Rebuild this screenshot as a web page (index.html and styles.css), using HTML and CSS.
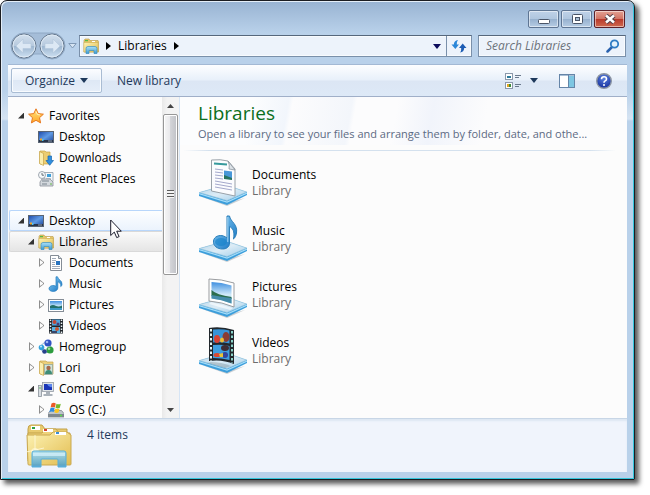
FILE: index.html
```html
<!DOCTYPE html>
<html lang="en">
<head>
  <meta charset="UTF-8">
  <meta name="viewport" content="width=device-width, initial-scale=1">
  <title>Libraries</title>
  <link rel="stylesheet" href="styles.css">
</head>
<body>

<!-- Icon sprite -->
<svg class="sprite" width="0" height="0" aria-hidden="true">
  <defs>
    <linearGradient id="g-folder" x1="0" y1="0" x2="1" y2="1">
      <stop offset="0" stop-color="#fdf3b4"/><stop offset="1" stop-color="#e2bc50"/>
    </linearGradient>
    <linearGradient id="g-blue" x1="0" y1="0" x2="0" y2="1">
      <stop offset="0" stop-color="#a9e0f8"/><stop offset="1" stop-color="#3f9bd0"/>
    </linearGradient>
    <linearGradient id="g-note" x1="0" y1="0" x2="1" y2="1">
      <stop offset="0" stop-color="#8ed2f6"/><stop offset="1" stop-color="#0f6fc0"/>
    </linearGradient>
    <linearGradient id="g-screen" x1="0" y1="0" x2="1" y2="1">
      <stop offset="0" stop-color="#1c48a8"/><stop offset=".5" stop-color="#5f9ae4"/><stop offset="1" stop-color="#1a3f94"/>
    </linearGradient>
    <linearGradient id="g-star" x1="0" y1="0" x2="0" y2="1">
      <stop offset="0" stop-color="#ffe680"/><stop offset="1" stop-color="#ffa726"/>
    </linearGradient>
    <linearGradient id="g-sky" x1="0" y1="0" x2="0" y2="1">
      <stop offset="0" stop-color="#3f8fe0"/><stop offset=".6" stop-color="#d4ecfa"/><stop offset="1" stop-color="#7cc0dc"/>
    </linearGradient>
    <linearGradient id="g-tray" x1="0" y1="0" x2="1" y2="1">
      <stop offset="0" stop-color="#b3d3e8"/><stop offset=".5" stop-color="#dcecf6"/><stop offset="1" stop-color="#9fcdea"/>
    </linearGradient>
    <linearGradient id="g-orb" x1="0" y1="0" x2="0" y2="1">
      <stop offset="0" stop-color="#d3e0ee"/><stop offset=".48" stop-color="#b7cade"/><stop offset=".5" stop-color="#9cb5cf"/><stop offset="1" stop-color="#cfe2f3"/>
    </linearGradient>
    <radialGradient id="g-help" cx=".5" cy=".3" r=".7">
      <stop offset="0" stop-color="#5d83e0"/><stop offset="1" stop-color="#152f9c"/>
    </radialGradient>

    <symbol id="i-libraries" viewBox="0 0 16 16">
      <path d="M1 2.500l1-1.500h4l1 1.500h8l.5 1v10.500h-14.500z" fill="#e5c668" stroke="#b89848" stroke-width=".6"/>
      <path d="M2 2h3v1.200h-3z" fill="#54b948"/><path d="M9 3h3v1h-3z" fill="#fff"/>
      <path d="M.8 4.500h14.400v9.500h-14.400z" fill="url(#g-folder)" stroke="#c9a851" stroke-width=".5"/>
      <path d="M3 15.500v-5q0-2 2-2h7q2 0 2 2v5h-3v-3h-5v3z" fill="url(#g-blue)" stroke="#3c8fc0" stroke-width=".7"/>
    </symbol>

    <symbol id="i-libraries-big" viewBox="0 0 48 48">
      <path d="M3 6q0-4 3-4h11l3 4h22v30h-39z" fill="#e8ca6e" stroke="#c3a24a"/>
      <rect x="6" y="3" width="9" height="4" fill="#fff"/><rect x="7" y="4" width="3" height="2" fill="#2fa043"/>
      <path d="M3 10h14l3-4h11l3 4h11v28h-42z" fill="#efd37b" stroke="#c3a24a"/>
      <rect x="18" y="6" width="10" height="3" fill="#fff"/><rect x="19" y="6" width="3" height="2" fill="#d8422c"/>
      <path d="M2 12h23l3-3h14l4 3v29q0 1-1 1h-41q-1 0-1-1z" fill="url(#g-folder)" stroke="#c9a851"/>
      <rect x="30" y="9" width="11" height="3" fill="#fff"/><rect x="31" y="9" width="3" height="2" fill="#3b8fd6"/>
      <path d="M10 12v22M1 29l18-4" stroke="#fffbe0" stroke-width="1" opacity=".8"/>
      <circle cx="10" cy="29" r="4" fill="#fffbe0" opacity=".6"/>
      <path d="M7 44v-14q0-2 2-2h30q2 0 2 2v14h-8v-7q0-1-1-1h-15q-1 0-1 1v7z" fill="url(#g-blue)" fill-opacity=".85" stroke="#56aeda"/>
      <path d="M8 30h32v3h-32z" fill="#d6f2fd" opacity=".7"/>
    </symbol>

    <symbol id="i-star" viewBox="0 0 16 16">
      <path d="M8 .8l2.200 4.800 5.200.6-3.900 3.500 1.100 5.200-4.600-2.600-4.600 2.600 1.100-5.200-3.900-3.500 5.200-.6z" fill="url(#g-star)" stroke="#e8781e"/>
      <path d="M8 3.500l1.400 3 2.500.4" fill="none" stroke="#fff3bd"/>
    </symbol>

    <symbol id="i-desktop" viewBox="0 0 16 16">
      <rect x=".5" y="2.500" width="15" height="11" fill="url(#g-screen)" stroke="#596473"/>
      <rect x="1" y="11" width="14" height="2" fill="#28344a"/>
      <path d="M2 9.500h2v2h-2z" fill="#f0a52c"/><path d="M4 10h1.500v2h-1.500z" fill="#4fc4f4"/>
      <path d="M10 12h4" stroke="#a9bad0" stroke-width=".8"/>
    </symbol>

    <symbol id="i-downloads" viewBox="0 0 16 16">
      <path d="M2 1h5l1 1h4v12h-10z" fill="#eccd70" stroke="#c5a349" stroke-width=".7"/>
      <path d="M1.500 1.500l4 2v12l-4-2z" fill="#fbeeae" stroke="#c5a349" stroke-width=".7"/>
      <path d="M10 6h3.500v4.500h2l-3.800 4.800-3.700-4.800h2z" fill="#2f8fe0" stroke="#1765ae" stroke-width=".7"/>
    </symbol>

    <symbol id="i-recent" viewBox="0 0 16 16">
      <path d="M6 1.500h9v9h-9z" fill="#f4f7fa" stroke="#9099a3" stroke-width=".8"/>
      <path d="M9 3h4v3h-4z" fill="#3f9fd8"/><path d="M8 8h5" stroke="#80909f"/>
      <path d="M2 11l2-3h8l3 3v4h-13z" fill="#d3d8dd" stroke="#8a9199" stroke-width=".8"/>
      <path d="M4 10h7M4 13h5" stroke="#7b858f"/><path d="M12 13h2" stroke="#65b848"/>
      <circle cx="4" cy="4" r="3.500" fill="#f7fafc" stroke="#8a939d" stroke-width=".8"/>
      <path d="M4 2v2.200h2" fill="none" stroke="#46515c" stroke-width=".8"/>
    </symbol>

    <symbol id="i-document" viewBox="0 0 16 16">
      <path d="M2.500.5h8l3 3v12h-11z" fill="#fff" stroke="#858d96"/>
      <path d="M10.500.5v3h3" fill="#dfe5ea" stroke="#858d96"/>
      <path d="M4 3.500h4M4 5.500h4M4 7.500h3M4 9.500h3M4 11.500h8M4 13.500h8" stroke="#8997a8" stroke-width=".8"/>
      <rect x="8" y="6" width="4" height="4" fill="#2874c0"/>
    </symbol>

    <symbol id="i-music" viewBox="0 0 16 16">
      <path d="M8 .8h1.500c.5 3 4.800 3.500 4.500 7.500-.1 1.300-.8 2-1.200 2.300.4-3-1.300-4.200-3-4.800v6.200c0 2-2 3.400-4.500 3.400-2.300 0-4.500-1-4.300-3 .2-2 2.700-3.200 5-2.800l2 .6z" fill="url(#g-note)" stroke="#1d78bd" stroke-width=".7"/>
    </symbol>

    <symbol id="i-picture" viewBox="0 0 16 16">
      <rect x=".5" y="2.500" width="15" height="12" fill="#fff" stroke="#858d96"/>
      <rect x="2" y="4" width="12" height="9" fill="url(#g-sky)"/>
      <path d="M2 9q3-2 6 0 3 1 6-.5v2.500h-12z" fill="#24706a"/><path d="M2 11h12v2h-12z" fill="#3f9ac8"/>
    </symbol>

    <symbol id="i-video" viewBox="0 0 16 16">
      <rect x="1" y="1" width="14" height="14.500" fill="#20262c"/>
      <rect x="4" y="1.500" width="8" height="6" fill="#4fa3dc"/><rect x="4" y="9" width="8" height="6" fill="#58b4e6"/>
      <circle cx="6.500" cy="4" r="2" fill="#bf4736"/><circle cx="10" cy="6" r="1.500" fill="#4b3a72"/>
      <circle cx="9" cy="11" r="2" fill="#c85632"/><path d="M4 14h5" stroke="#34466e" stroke-width="2"/>
      <path d="M2.500 1.500v14M13.500 1.500v14" stroke="#eaf3f5" stroke-width="1.500" stroke-dasharray="1.500 1.500"/>
    </symbol>

    <symbol id="i-homegroup" viewBox="0 0 16 16">
      <circle cx="8" cy="8.500" r="5" fill="none" stroke="#8fb6d8"/>
      <circle cx="10" cy="4" r="3.600" fill="#3153c4"/><circle cx="3.500" cy="8.500" r="2.800" fill="#35a2dc"/>
      <circle cx="12" cy="11" r="3.600" fill="#2d9c3e"/><circle cx="6.500" cy="12.500" r="2.300" fill="#27418c"/>
      <circle cx="9" cy="3" r="1.300" fill="#9db4f2"/><circle cx="11" cy="9.800" r="1.300" fill="#a5e29e"/><circle cx="3" cy="7.500" r="1" fill="#c6ecfb"/>
    </symbol>

    <symbol id="i-user" viewBox="0 0 16 16">
      <path d="M2 1h6l1 1h6v12h-13z" fill="#ecd07c" stroke="#c5a349" stroke-width=".7"/>
      <path d="M1.500 1.500l4 2v12l-4-2z" fill="#fbeeae" stroke="#c5a349" stroke-width=".7"/>
      <rect x="6.500" y="4.500" width="8" height="10" fill="#cfe3dc" stroke="#8ca398" stroke-width=".7"/>
      <circle cx="10.500" cy="8" r="2.200" fill="#a5694a"/><path d="M7 14q0-4 3.500-4t3.500 4z" fill="#3f8d77"/>
    </symbol>

    <symbol id="i-computer" viewBox="0 0 16 16">
      <rect x=".5" y="4.500" width="3" height="11" fill="#d8dde2" stroke="#8a929b" stroke-width=".8"/>
      <path d="M1.500 7h1" stroke="#3cae3c" stroke-width="1.500"/>
      <rect x="4.500" y="1.500" width="11" height="9" fill="#dfe4e8" stroke="#939ba4" stroke-width=".8"/>
      <rect x="6" y="3" width="8" height="6" fill="#1a35b6"/><path d="M9 3h5v3q-3 1-5-3z" fill="#5c86ec"/>
      <path d="M8 11h4v2h2.500v2h-9v-2h2.500z" fill="#aab2ba"/>
    </symbol>

    <symbol id="i-drive" viewBox="0 0 16 16">
      <path d="M0 11.500l2.500-3h11l2.500 3v3.500h-16z" fill="#bfc5cb" stroke="#737b84" stroke-width=".7"/>
      <path d="M0 12h16v3h-16z" fill="#7f8890"/><path d="M12 13.500h2" stroke="#5be04a" stroke-width="1.500"/>
      <path d="M3.500 1.500q2.500-1.500 4.300 0l-.9 4q-2-1.200-4.300 0z" fill="#ec5a26"/>
      <path d="M8.500 1.800q2 1 4.300 0l-1 4q-2 1.200-4.300 0z" fill="#76b82a"/>
      <path d="M2.400 6.200q2.500-1.300 4.300 0l-1 3.800q-2-1.200-4.300 0z" fill="#2f8ce0"/>
      <path d="M7.300 6.500q2 1.200 4.300 0l-1 3.800q-2 1.200-4.300 0z" fill="#fbc51e"/>
    </symbol>

    <symbol id="i-tray" viewBox="0 0 48 48">
      <path d="M3 38l25 9 18-8-18 5z" fill="#9aa4ac" opacity=".5"/>
      <path d="M0 33.500l27-7.500 21 7v3l-20 10-28-9z" fill="#3c9edb"/>
      <path d="M0 34.500l28 8.500 20-9" fill="none" stroke="#a4dcf8" stroke-width="1.200"/>
      <path d="M.5 33.500l26.500-7.500 20.500 7-19.500 8.500z" fill="url(#g-tray)" stroke="#a5cbe0" stroke-width=".7"/>
    </symbol>

    <symbol id="b-document" viewBox="0 0 48 48">
      <use href="#i-tray"/>
      <path d="M12.500 1q9-1 16.500 1l7 8v27l-23.500-5z" fill="#fbfcfe" stroke="#8e979f" stroke-width=".9"/>
      <path d="M29 2q2 4 1 8l6 1z" fill="#dde3e8" stroke="#8e979f" stroke-width=".8"/>
      <path d="M15 4.500l13 1" stroke="#36999c" stroke-width="2"/>
      <path d="M16 10l8 1M16 13l8 1M16 16l8 1M16 19l8 1M16 22l17 3M16 25l17 3M16 28l17 3" stroke="#a4a9cc" stroke-width="1"/>
      <path d="M25 11.500l8 1v8l-8-1z" fill="#4897d8"/><path d="M25 16l8 3v2l-8-1z" fill="#277360"/>
    </symbol>

    <symbol id="b-music" viewBox="0 0 48 48">
      <use href="#i-tray"/>
      <path d="M28 1h2.500c1 6 8.500 8 7 17-.4 2.500-1.500 5-3 6 1.500-8-1-11-4-12.500v16.500c0 4-3 6-7 6-5 0-9.500-3-9-8 .4-4.500 6-6.500 10-5 1.500.5 2.600 1.200 3.500 2z" fill="url(#g-note)" stroke="#2b7fba"/>
      <ellipse cx="22" cy="27" rx="6" ry="4" fill="#1482ca" opacity=".6"/>
      <path d="M28.800 2v25" stroke="#b9e5fb" stroke-width=".8"/>
    </symbol>

    <symbol id="b-picture" viewBox="0 0 48 48">
      <use href="#i-tray"/>
      <path d="M10 8q12 0 25 4v24q-12-5-25-6z" fill="#fff" stroke="#9a9da0"/>
      <path d="M12.500 11q10 0 20 3.500v18q-10-4-20-5z" fill="url(#g-sky)"/>
      <path d="M12.500 19q5 5 20 7v2q-10 0-20-3z" fill="#2c6e4d"/>
      <path d="M12.500 24q10 2 20 3v5.500q-10-4-20-5z" fill="#468dab"/>
      <path d="M12 31l22 6-3 2-21-6z" fill="#fff" opacity=".6"/>
    </symbol>

    <symbol id="b-video" viewBox="0 0 48 48">
      <use href="#i-tray"/>
      <path d="M10 1q12-2 25 2v34q-12-5-25-3z" fill="#22282d"/>
      <path d="M14 2.500q9-1 16.500 1v13q-8-2-16.500-1z" fill="#3894d8"/>
      <path d="M14 18q9-1 16.500 1v14q-8-2-16.500-2z" fill="#3e9fe0"/>
      <ellipse cx="27" cy="10" rx="3.500" ry="5" fill="#8a3c33"/><ellipse cx="18" cy="12" rx="3" ry="4" fill="#d74335"/>
      <ellipse cx="23" cy="13" rx="2" ry="2.500" fill="#f0bd32"/><ellipse cx="26" cy="21" rx="4" ry="3" fill="#3d2c34"/>
      <ellipse cx="18" cy="28" rx="3.500" ry="2" fill="#dc4931"/><ellipse cx="26" cy="28" rx="3" ry="3" fill="#35469b"/><path d="M20 27l4-1v4h-3z" fill="#e9c336"/>
      <path d="M12 2v32" stroke="#e6f7f5" stroke-width="2" stroke-dasharray="2.500 2"/>
      <path d="M33 4v32" stroke="#8ad3ca" stroke-width="2" stroke-dasharray="2.500 2"/>
      <path d="M12 35q10 0 20 4l-6 2-18-5z" fill="#7a8b94" opacity=".4"/>
    </symbol>
  </defs>
</svg>

<div class="window">
  <header class="frame-top">
    <div class="titlebar">
      <button class="caption" aria-label="Minimize">
        <svg width="14" height="14"><rect x="1.500" y="7.500" width="11" height="4" rx="1" fill="#fff" stroke="#4a5568"/></svg>
      </button>
      <button class="caption" aria-label="Maximize">
        <svg width="14" height="14"><rect x="2.500" y="2.500" width="10" height="9" rx="1" fill="#fff" stroke="#4a5568"/><rect x="5.500" y="5.500" width="4" height="3" fill="#a9bdd3" stroke="#4a5568"/></svg>
      </button>
      <button class="caption close" aria-label="Close">
        <svg width="14" height="14"><path d="M3 3.500l8 7M11 3.500l-8 7" stroke="#55414a" stroke-width="4.500"/><path d="M3 3.500l8 7M11 3.500l-8 7" stroke="#fff" stroke-width="2.500"/></svg>
      </button>
    </div>

    <div class="navbar">
      <div class="travel">
        <svg class="travel-bed" width="56" height="28" aria-hidden="true">
          <path d="M14 1h28a13 13 0 0 1 0 26q-6 0-10-5h-8q-4 5-10 5a13 13 0 0 1 0-26z" fill="#a5bdd8" stroke="#8fa8c4"/>
        </svg>
        <button class="orb" aria-label="Back">
          <svg width="26" height="26"><circle cx="13" cy="13" r="12" fill="url(#g-orb)" stroke="#66788d"/><circle cx="13" cy="13" r="11" fill="none" stroke="#dfeaf5"/><path d="M5 13l7-7v4.500h8v5h-8v4.500z" fill="#dce8f4" stroke="#b4c8dc" stroke-width=".6"/></svg>
        </button>
        <button class="orb" aria-label="Forward">
          <svg width="26" height="26"><circle cx="13" cy="13" r="12" fill="url(#g-orb)" stroke="#66788d"/><circle cx="13" cy="13" r="11" fill="none" stroke="#dfeaf5"/><path d="M21 13l-7-7v4.500h-8v5h8v4.500z" fill="#dce8f4" stroke="#b4c8dc" stroke-width=".6"/></svg>
        </button>
      </div>
      <button class="recent" aria-label="Recent pages">
        <svg width="9" height="6"><path d="M.8.5h7.400l-3.700 4.500z" fill="#d6e4f2" stroke="#8099b5"/></svg>
      </button>

      <nav class="address">
        <svg class="icon"><use href="#i-libraries"/></svg>
        <svg class="crumb-arrow" width="5" height="8"><path d="M0 0l5 4-5 4z"/></svg>
        <a href="#">Libraries</a>
        <svg class="crumb-arrow" width="5" height="8"><path d="M0 0l5 4-5 4z"/></svg>
        <button class="history" aria-label="Previous locations">
          <svg width="8" height="5"><path d="M0 0h8l-4 5z" fill="#0c0c5c"/></svg>
        </button>
        <button class="refresh" aria-label="Refresh">
          <svg width="16" height="16"><path d="M7 2q-1.500 1.500-1.200 4.500h2.200l-3.700 4.500-3.800-4.500h2.300q.2-4 4.200-4.500z" fill="#2b87d8"/><path d="M9 14.500q1.500-1.500 1.200-4.500h-2.200l3.700-4.500 3.800 4.500h-2.300q-.2 4-4.200 4.500z" fill="#1c5cb4"/></svg>
        </button>
      </nav>

      <div class="search">
        <input type="search" placeholder="Search Libraries" aria-label="Search Libraries">
        <svg width="14" height="14"><path d="M6.500 7.500l-5 5" stroke="#2a62ae" stroke-width="2.500" stroke-linecap="round"/><circle cx="8.500" cy="5" r="3.700" fill="#e4f2fc" stroke="#2f7cc4" stroke-width="1.800"/></svg>
      </div>
    </div>
  </header>

  <div class="client">
    <div class="toolbar">
      <button class="organize">Organize
        <svg width="8" height="5"><path d="M0 0h8l-4 5z" fill="#1e395b"/></svg>
      </button>
      <button class="plain">New library</button>
      <div class="tools">
        <button aria-label="Change your view">
          <svg width="16" height="16"><rect x=".5" y=".5" width="7" height="6" fill="#fff" stroke="#8b99ab"/><rect x="2" y="3" width="4" height="2" fill="#2d7a9a"/><rect x=".5" y="9.500" width="7" height="6" fill="#fff" stroke="#8b99ab"/><path d="M2 11h2v3h-2z" fill="#e0a420"/><path d="M4 11h2v3h-2z" fill="#3b8a3b"/><path d="M10 2.500h6M10 4.500h4M10 11.500h6M10 13.500h4" stroke="#6b7a8e"/></svg>
          <svg width="8" height="5"><path d="M0 0h8l-4 5z" fill="#1e395b"/></svg>
        </button>
        <button aria-label="Show the preview pane">
          <svg width="16" height="14"><rect x=".5" y=".5" width="15" height="13" fill="#fff" stroke="#6585a8"/><path d="M1 1.500h14" stroke="#a9bfd6"/><rect x="10" y="2" width="5" height="11" fill="#7dc6e2"/><path d="M9.500 1v12" stroke="#6585a8"/></svg>
        </button>
        <button aria-label="Get help">
          <svg width="16" height="16"><circle cx="8" cy="8" r="7.300" fill="url(#g-help)" stroke="#8c95a3" stroke-width="1.400"/><path d="M5.500 6.200q0-2.400 2.500-2.400t2.500 2.200q0 1.200-1.300 1.900-1.200.7-1.200 1.800" fill="none" stroke="#fff" stroke-width="1.600"/><circle cx="8" cy="12" r="1" fill="#fff"/></svg>
        </button>
      </div>
    </div>

    <div class="panes">
      <aside class="sidebar">
        <ul class="tree">
          <li><a href="#" class="open"><i></i><svg class="icon"><use href="#i-star"/></svg>Favorites</a></li>
          <li><a href="#" class="level-2"><i></i><svg class="icon"><use href="#i-desktop"/></svg>Desktop</a></li>
          <li><a href="#" class="level-2"><i></i><svg class="icon"><use href="#i-downloads"/></svg>Downloads</a></li>
          <li><a href="#" class="level-2"><i></i><svg class="icon"><use href="#i-recent"/></svg>Recent Places</a></li>
        </ul>
        <ul class="tree">
          <li><a href="#" class="open hovered"><i></i><svg class="icon"><use href="#i-desktop"/></svg>Desktop</a></li>
          <li><a href="#" class="level-2 open selected"><i></i><svg class="icon"><use href="#i-libraries"/></svg>Libraries</a></li>
          <li><a href="#" class="level-3 closed"><i></i><svg class="icon"><use href="#i-document"/></svg>Documents</a></li>
          <li><a href="#" class="level-3 closed"><i></i><svg class="icon"><use href="#i-music"/></svg>Music</a></li>
          <li><a href="#" class="level-3 closed"><i></i><svg class="icon"><use href="#i-picture"/></svg>Pictures</a></li>
          <li><a href="#" class="level-3 closed"><i></i><svg class="icon"><use href="#i-video"/></svg>Videos</a></li>
          <li><a href="#" class="level-2 closed"><i></i><svg class="icon"><use href="#i-homegroup"/></svg>Homegroup</a></li>
          <li><a href="#" class="level-2 closed"><i></i><svg class="icon"><use href="#i-user"/></svg>Lori</a></li>
          <li><a href="#" class="level-2 open"><i></i><svg class="icon"><use href="#i-computer"/></svg>Computer</a></li>
          <li><a href="#" class="level-3 closed"><i></i><svg class="icon"><use href="#i-drive"/></svg>OS (C:)</a></li>
        </ul>
      </aside>

      <div class="scrollbar" aria-hidden="true">
        <div class="scroll-arrow"><svg width="7" height="4"><path d="M0 4l3.500-4 3.500 4z" fill="#444"/></svg></div>
        <div class="thumb"><span></span></div>
        <div class="scroll-arrow last"><svg width="7" height="4"><path d="M0 0l3.500 4 3.500-4z" fill="#444"/></svg></div>
      </div>

      <main class="content">
        <div class="heading">
          <h1>Libraries</h1>
          <p>Open a library to see your files and arrange them by folder, date, and othe...</p>
        </div>
        <ul class="items">
          <li><a href="#"><svg><use href="#b-document"/></svg><span>Documents<small>Library</small></span></a></li>
          <li><a href="#"><svg><use href="#b-music"/></svg><span>Music<small>Library</small></span></a></li>
          <li><a href="#"><svg><use href="#b-picture"/></svg><span>Pictures<small>Library</small></span></a></li>
          <li><a href="#"><svg><use href="#b-video"/></svg><span>Videos<small>Library</small></span></a></li>
        </ul>
      </main>
    </div>

    <footer class="details">
      <svg><use href="#i-libraries-big"/></svg>
      <span>4 items</span>
    </footer>
  </div>

  <svg class="pointer" width="12" height="20" aria-hidden="true"><path d="M.7 1v15.500l3.600-3.400 2.400 5.500 2.400-1-2.400-5.400h4.600z" fill="#fff" stroke="#1c1c2c"/></svg>
</div>

</body>
</html>
```
FILE: styles.css
```css
* {
  box-sizing: border-box;
}
body {
  margin: 0;
  padding: 0 15px 15px 0;
  height: 100vh;
  background: #fff;
  font-family: "Open Sans", "Noto Sans", sans-serif;
  font-size: 12px;
  line-height: 16px;
  color: #000;
}
ul {
  list-style: none;
  margin: 0;
  padding: 0;
}
a {
  color: inherit;
  text-decoration: none;
}
button {
  display: flex;
  align-items: center;
  justify-content: center;
  padding: 0;
  border: 0;
  background: none;
  font: inherit;
  color: inherit;
}
svg {
  display: block;
  flex: none;
}
.sprite {
  position: absolute;
}
.icon {
  width: 16px;
  height: 16px;
}

/* window frame */
.window {
  position: relative;
  display: flex;
  flex-direction: column;
  height: 100%;
  padding: 0 7px 7px;
  border: 1px solid #1b1d22;
  border-radius: 7px 7px 0 0;
  background: linear-gradient(#98b3d2, #b9d1ea 32px, #b9d1ea 90px, #d5e3f2 118px, #b9d1ea 120px);
  box-shadow: inset 1px 1px 0 #e4eef8, inset -1px -1px 0 #34c6dc, 4px 4px 5px rgba(0, 0, 0, 0.65);
}
.frame-top {
  padding: 9px 1px 0 3px;
}
.titlebar {
  display: flex;
  justify-content: flex-end;
  gap: 2px;
  padding-right: 1px;
}
.caption {
  width: 31px;
  height: 18px;
  border: 1px solid #5e7593;
  border-radius: 2px;
  background: linear-gradient(#bfd2e8, #b0c6df 48%, #96b0ce 50%, #b6cce4);
  box-shadow: inset 0 0 0 1px rgba(255, 255, 255, 0.5);
}
.caption.close {
  border-color: #5b2029;
  background: linear-gradient(#e3a193, #d27465 48%, #b8382a 50%, #cf6a50);
}

/* navigation row */
.navbar {
  display: flex;
  align-items: center;
  height: 36px;
}
.travel {
  position: relative;
  display: flex;
  gap: 2px;
}
.travel-bed {
  position: absolute;
  left: -1px;
  top: -1px;
}
.orb {
  position: relative;
  width: 26px;
  height: 26px;
}
.recent {
  width: 14px;
}
.address,
.search {
  display: flex;
  align-items: center;
  height: 22px;
  border: 1px solid #7a90aa;
  border-top-color: #56677c;
  background: #edf3fb;
  box-shadow: inset 0 0 0 1px #f8fbfe;
}
.address {
  flex: 1;
  gap: 7px;
  padding-left: 3px;
}
.history {
  width: 18px;
  margin-left: auto;
}
.refresh {
  width: 25px;
  height: 20px;
  margin-left: -7px;
  border-left: 1px solid #7a90aa;
}
.search {
  width: 148px;
  margin-left: 6px;
  padding: 0 5px 0 7px;
}
.search input {
  flex: 1;
  min-width: 0;
  padding: 0;
  border: 0;
  outline: 0;
  background: none;
  font: inherit;
  font-style: italic;
}
.search input::placeholder {
  color: #6d747c;
}

/* client area */
.client {
  flex: 1;
  display: flex;
  flex-direction: column;
  min-height: 0;
  background: #fcfcfc;
}
.toolbar {
  display: flex;
  align-items: center;
  height: 33px;
  padding: 0 15px 0 3px;
  border-top: 1px solid #a3b9d4;
  border-bottom: 1px solid #a0afc8;
  background: linear-gradient(#fdfeff, #e8f0fa 48%, #dce6f4 52%, #dde9f7);
  color: #1e395b;
}
.organize {
  gap: 5px;
  width: 91px;
  height: 25px;
  border: 1px solid #a9bcd3;
  border-radius: 2px;
  background: linear-gradient(#fcfdff, #eaf1fa 48%, #dee8f5 50%, #e6eef9);
  box-shadow: inset 0 0 0 1px #f8fbfe;
}
.plain {
  margin-left: 15px;
}
.tools {
  display: flex;
  align-items: center;
  gap: 21px;
  margin-left: auto;
}
.tools button {
  gap: 9px;
}

.panes {
  flex: 1;
  display: flex;
  min-height: 0;
}
.sidebar {
  width: 154px;
  padding: 8px 0 0 1px;
  overflow: hidden;
}
.tree {
  margin-bottom: 21px;
}
.tree a {
  display: flex;
  align-items: center;
  height: 21px;
  padding-left: 8px;
  border: 1px solid transparent;
  border-right: 0;
  border-radius: 2px 0 0 2px;
}
.tree .level-2 {
  padding-left: 18px;
}
.tree .level-3 {
  padding-left: 28px;
}
.tree .icon {
  margin-right: 5px;
}
.tree i {
  width: 9px;
  height: 9px;
  margin-right: 1px;
}
.tree .open i {
  width: 6px;
  height: 6px;
  margin-right: 4px;
  background: #333;
  clip-path: polygon(100% 0, 100% 100%, 0 100%);
}
.tree .closed i {
  background: #8d8d8d;
  clip-path: polygon(evenodd, 1px 0, 6px 4px, 6px 5px, 1px 9px, 1px 0, 2px 2px, 2px 7px, 5px 5px, 5px 4px, 2px 2px);
}
.tree .hovered {
  border-color: #b8d6fb;
  background: linear-gradient(#fdfeff, #ebf3fd);
}
.tree .selected {
  border-color: #d9d9d9;
  background: linear-gradient(#fafafa, #e5e5e5);
}

.scrollbar {
  display: flex;
  flex-direction: column;
  width: 17px;
  background: linear-gradient(90deg, #e9e9e9, #f3f3f3 30%, #f3f3f3);
}
.scroll-arrow {
  display: flex;
  align-items: center;
  justify-content: center;
  height: 17px;
}
.scroll-arrow.last {
  margin-top: auto;
}
.thumb {
  display: flex;
  align-items: center;
  justify-content: center;
  height: 50%;
  margin: 0 1px;
  border: 1px solid #979797;
  border-radius: 2px;
  background: linear-gradient(90deg, #f6f6f6, #e9e9ec 45%, #d3d4d8 50%, #bfc1c6);
  box-shadow: inset 0 0 0 1px #fff;
}
.thumb span {
  width: 7px;
  height: 8px;
  background: repeating-linear-gradient(#5c5c5c 0 1px, #f4f4f4 1px 3px);
}

.content {
  flex: 1;
  min-width: 0;
  border-left: 1px solid #d6e5f5;
  background: linear-gradient(100deg, #fcfdfe 16%, #f2f6fc 24%, #fcfcfd 25%, #f3f6fb 38%, #fcfcfd 39%, #fcfcfd 48%, #f1f4fb 56%, #fcfcfd 68%) no-repeat 0 0 / 100% 48px;
}
.heading {
  margin: 0 12px 0 4px;
  padding: 4px 0 8px 14px;
  border-bottom: 1px solid;
  border-image: linear-gradient(90deg, transparent, #d4e1ee 6%, #d4e1ee 94%, transparent) 1;
}
h1 {
  margin: 0;
  font-size: 19px;
  font-weight: 400;
  line-height: 25px;
  color: #0b6f1c;
}
.heading p {
  margin: 0;
  overflow: hidden;
  font-size: 11px;
  white-space: nowrap;
  text-overflow: ellipsis;
  color: #5c6a83;
}
.items {
  padding: 4px 0 0 19px;
}
.items a {
  display: flex;
  align-items: center;
  gap: 5px;
  height: 56px;
}
.items svg {
  width: 48px;
  height: 48px;
}
.items small {
  display: block;
  font-size: 12px;
  color: #6d6d6d;
}

.details {
  display: flex;
  gap: 14px;
  height: 54px;
  padding: 4px 17px;
  border-top: 1px solid #c8d6e6;
  background: #f0f4fc;
  box-shadow: inset 0 2px 2px #dde7f3;
  color: #1e395b;
}
.details svg {
  width: 48px;
  height: 48px;
}
.details span {
  padding-top: 4px;
}

.pointer {
  position: absolute;
  left: 109px;
  top: 218px;
}
```
